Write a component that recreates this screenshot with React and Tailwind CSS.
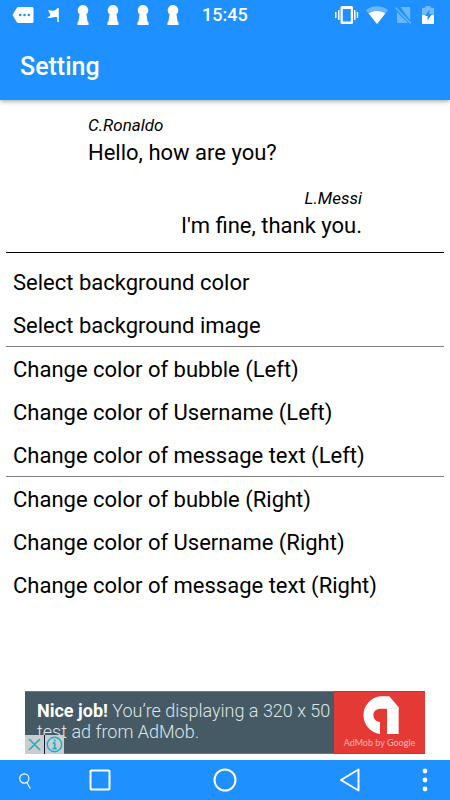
const sections = [
  ['Select background color', 'Select background image'],
  [
    'Change color of bubble (Left)',
    'Change color of Username (Left)',
    'Change color of message text (Left)',
  ],
  [
    'Change color of bubble (Right)',
    'Change color of Username (Right)',
    'Change color of message text (Right)',
  ],
];

function KeyholeIcon() {
  return (
    <svg width="12" height="20" viewBox="0 0 12 20" fill="currentColor">
      <path d="M6 0a5.300 5.300 0 0 1 3.400 9.300L10.700 17H11.500v3H.5v-3h.8L2.600 9.300A5.300 5.300 0 0 1 6 0z" />
    </svg>
  );
}

function StatusBar() {
  return (
    <div className="flex h-[30px] items-center justify-between pl-2 pr-[14px]">
      <div className="flex items-center">
        <span className="flex w-[30px] justify-center">
          <svg width="22" height="16" viewBox="0 0 22 16">
            <path d="M6.500 0H20a1.500 1.500 0 0 1 1.500 1.500v13A1.500 1.500 0 0 1 20 16H6.500q-1 0-1.600-.8L.5 8 4.900.8Q5.500 0 6.500 0z" fill="#fff" />
            <circle cx="8.200" cy="8" r="1.300" fill="#1e90ff" />
            <circle cx="12.500" cy="8" r="1.300" fill="#1e90ff" />
            <circle cx="16.800" cy="8" r="1.300" fill="#1e90ff" />
          </svg>
        </span>
        <span className="flex w-[30px] justify-center">
          <svg width="12" height="14" viewBox="0 0 12 14" fill="currentColor">
            <path d="M11.800 0v14h-1.500V9.400C8.500 8.500 6 9.500 3.500 10 2.300 10.300 1 9.800 0 9.200c1.600-.3 2.800-1.200 3.400-2.500L1 2c3 .6 4 .9 6 .4C8.800 2 10 1.200 10.500 0z" />
          </svg>
        </span>
        <span className="flex w-[30px] justify-center"><KeyholeIcon /></span>
        <span className="flex w-[30px] justify-center"><KeyholeIcon /></span>
        <span className="flex w-[30px] justify-center"><KeyholeIcon /></span>
        <span className="flex w-[30px] justify-center"><KeyholeIcon /></span>
        <span className="ml-[14px] text-[18px] leading-[32px] font-medium">15:45</span>
      </div>

      <div className="flex items-center gap-[7px]">
        <svg width="24" height="18" viewBox="0 0 24 18" fill="currentColor">
          <path fillRule="evenodd" d="M7 0h9.500A1.500 1.500 0 0 1 18 1.500v15a1.500 1.500 0 0 1-1.500 1.500H7a1.500 1.500 0 0 1-1.500-1.500v-15A1.500 1.500 0 0 1 7 0zM7.800 3v12.500h8V3z" />
          <path d="M0 6h1.500v6H0zM3 4h1.500v10H3zM19 4h1.500v10H19zM21.700 6h1.500v6h-1.500z" />
        </svg>
        <svg width="22" height="18" viewBox="0 0 22 18" fill="currentColor">
          <path d="M11 18 0 4.200C3 1.600 7 .3 11 .3s8 1.300 11 3.900z" opacity=".35" />
          <path d="M11 18 2.800 7.600C5 5.900 8 4.900 11 4.900s6 1 8.200 2.700z" />
        </svg>
        <svg width="18" height="18" viewBox="0 0 18 18">
          <path d="M5.500 1H14q1.200 0 1.200 1.200v12zM2 6v9.800Q2 17 3.200 17H13z" fill="#fff" opacity=".35" />
          <path d="M.6 1.600 15.800 17.400" stroke="#fff" strokeWidth="1.300" opacity=".4" />
        </svg>
        <svg width="16" height="18" viewBox="0 0 16 18">
          <path d="M2 9V2.800q0-1 1-1h2.500V0h5v1.800H13q1 0 1 1V9z" fill="#fff" opacity=".38" />
          <path d="M2 9h12v8q0 1-1 1H3q-1 0-1-1z" fill="#fff" />
          <path d="M9.300 3.500 5 10h2.600v4.500L12 8H9.300z" fill="#1e90ff" />
        </svg>
      </div>
    </div>
  );
}

function Message({ name, text, right }) {
  return (
    <div className={right ? 'text-right' : 'text-left'}>
      <p className="text-[17px] leading-[22px] italic">{name}</p>
      <p className="pt-[2px] text-[22px] leading-[30px]">{text}</p>
    </div>
  );
}

function AdBanner() {
  return (
    <div className="relative mx-[25px] mb-[6px] flex h-[63px]">
      <a href="#ad" className="flex min-w-0 flex-1 border-y border-[#6c7b83] bg-[#455a64] pl-3">
        <p className="pt-[8px] text-[18px] leading-[21px] font-light text-[#dfe5e8]">
          <b className="font-bold text-white">Nice job!</b> You’re displaying a 320 x 50 test ad from AdMob.
        </p>
      </a>
      <a href="#admob" className="flex w-[91px] flex-col items-center border-y border-[#d92b28] bg-[#e53935] pt-[2px]">
        <svg width="42" height="42" viewBox="400 40 126 126">
          <path d="M463 47H491L519 80V160H484V84H463A20 20 0 0 0 463 124V160A57 57 0 0 1 463 47z" fill="#fff" />
          <path d="M484 84 519 80V84z" fill="#e3e3e3" />
        </svg>
        <span className="font-['Lato'] text-[9px] leading-[14px] whitespace-nowrap text-[#f6b4b2]">
          AdMob by <span className="font-medium">Google</span>
        </span>
      </a>
      <div className="absolute bottom-0 left-0 flex gap-px bg-[#0b2233] text-[#17b0cf]">
        <button type="button" aria-label="Close ad" className="flex h-[19px] w-[19px] items-center justify-center bg-[#cccccc]">
          <svg width="13" height="13" viewBox="0 0 13 13" stroke="currentColor" strokeWidth="1.600">
            <path d="M1 1l11 11M12 1 1 12" />
          </svg>
        </button>
        <button type="button" aria-label="Ad info" className="flex h-[19px] w-[19px] items-center justify-center bg-[#cccccc]">
          <svg width="17" height="17" viewBox="0 0 17 17" fill="none" stroke="currentColor">
            <circle cx="8.500" cy="8.500" r="7.200" strokeWidth="1.400" />
            <path d="M8.700 3.500v2M6.800 7.200h1.900v5.300M6.500 12.700h4.200" strokeWidth="1.700" />
          </svg>
        </button>
      </div>
    </div>
  );
}

function NavBar() {
  return (
    <nav className="flex h-10 bg-[#1e90ff] text-white">
      <button type="button" aria-label="Search" className="flex w-[50px] items-center justify-center">
        <svg width="14" height="18" viewBox="0 0 14 18" fill="none" stroke="currentColor" strokeWidth="1.100">
          <circle cx="6.300" cy="7.500" r="4.600" />
          <path d="M8.800 11.200 12.300 17.500" />
        </svg>
      </button>
      <div className="flex flex-1 justify-between">
        <button type="button" aria-label="Recent apps" className="flex w-[100px] items-center justify-center">
          <svg width="22" height="22" viewBox="0 0 22 22" fill="none" stroke="currentColor" strokeWidth="2">
            <rect x="1.500" y="1.500" width="19" height="19" rx="1" />
          </svg>
        </button>
        <button type="button" aria-label="Home" className="flex w-[100px] items-center justify-center">
          <svg width="24" height="24" viewBox="0 0 24 24" fill="none" stroke="currentColor" strokeWidth="2">
            <circle cx="12" cy="12" r="10.500" />
          </svg>
        </button>
        <button type="button" aria-label="Back" className="flex w-[100px] items-center justify-center">
          <svg width="22" height="24" viewBox="0 0 22 24" fill="none" stroke="currentColor" strokeWidth="2" strokeLinejoin="round">
            <path d="M19.500 1.500v21L2 12z" />
          </svg>
        </button>
      </div>
      <button type="button" aria-label="More" className="flex w-[50px] items-center justify-center">
        <svg width="6" height="24" viewBox="0 0 6 24" fill="currentColor">
          <circle cx="3" cy="3" r="2.400" />
          <circle cx="3" cy="12" r="2.400" />
          <circle cx="3" cy="21" r="2.400" />
        </svg>
      </button>
    </nav>
  );
}

export default function App() {
  return (
    <div className="flex min-h-screen flex-col bg-white font-['Roboto',sans-serif] text-black">
      <header className="bg-[#1e90ff] text-white shadow-[0_1px_5px_rgba(0,0,0,0.4)]">
        <StatusBar />
        <h1 className="px-5 pt-[21px] pb-[17px] text-[25px] leading-[32px] font-medium">Setting</h1>
      </header>

      <main className="flex-1 px-[6px] pb-6">
        <section className="flex flex-col gap-[19px] px-[82px] pt-[14px] pb-[11px]">
          <Message name="C.Ronaldo" text="Hello, how are you?" />
          <Message name="L.Messi" text="I'm fine, thank you." right />
        </section>

        <div className="border-t border-black pt-[7px]">
          {sections.map((items, i) => (
            <ul key={i} className="border-b border-[#808080] last:border-b-0">
              {items.map((item) => (
                <li key={item}>
                  <button type="button" className="block w-full px-[7px] pt-[2px] text-left text-[22px] leading-[41px]">
                    {item}
                  </button>
                </li>
              ))}
            </ul>
          ))}
        </div>
      </main>

      <AdBanner />
      <NavBar />
    </div>
  );
}
